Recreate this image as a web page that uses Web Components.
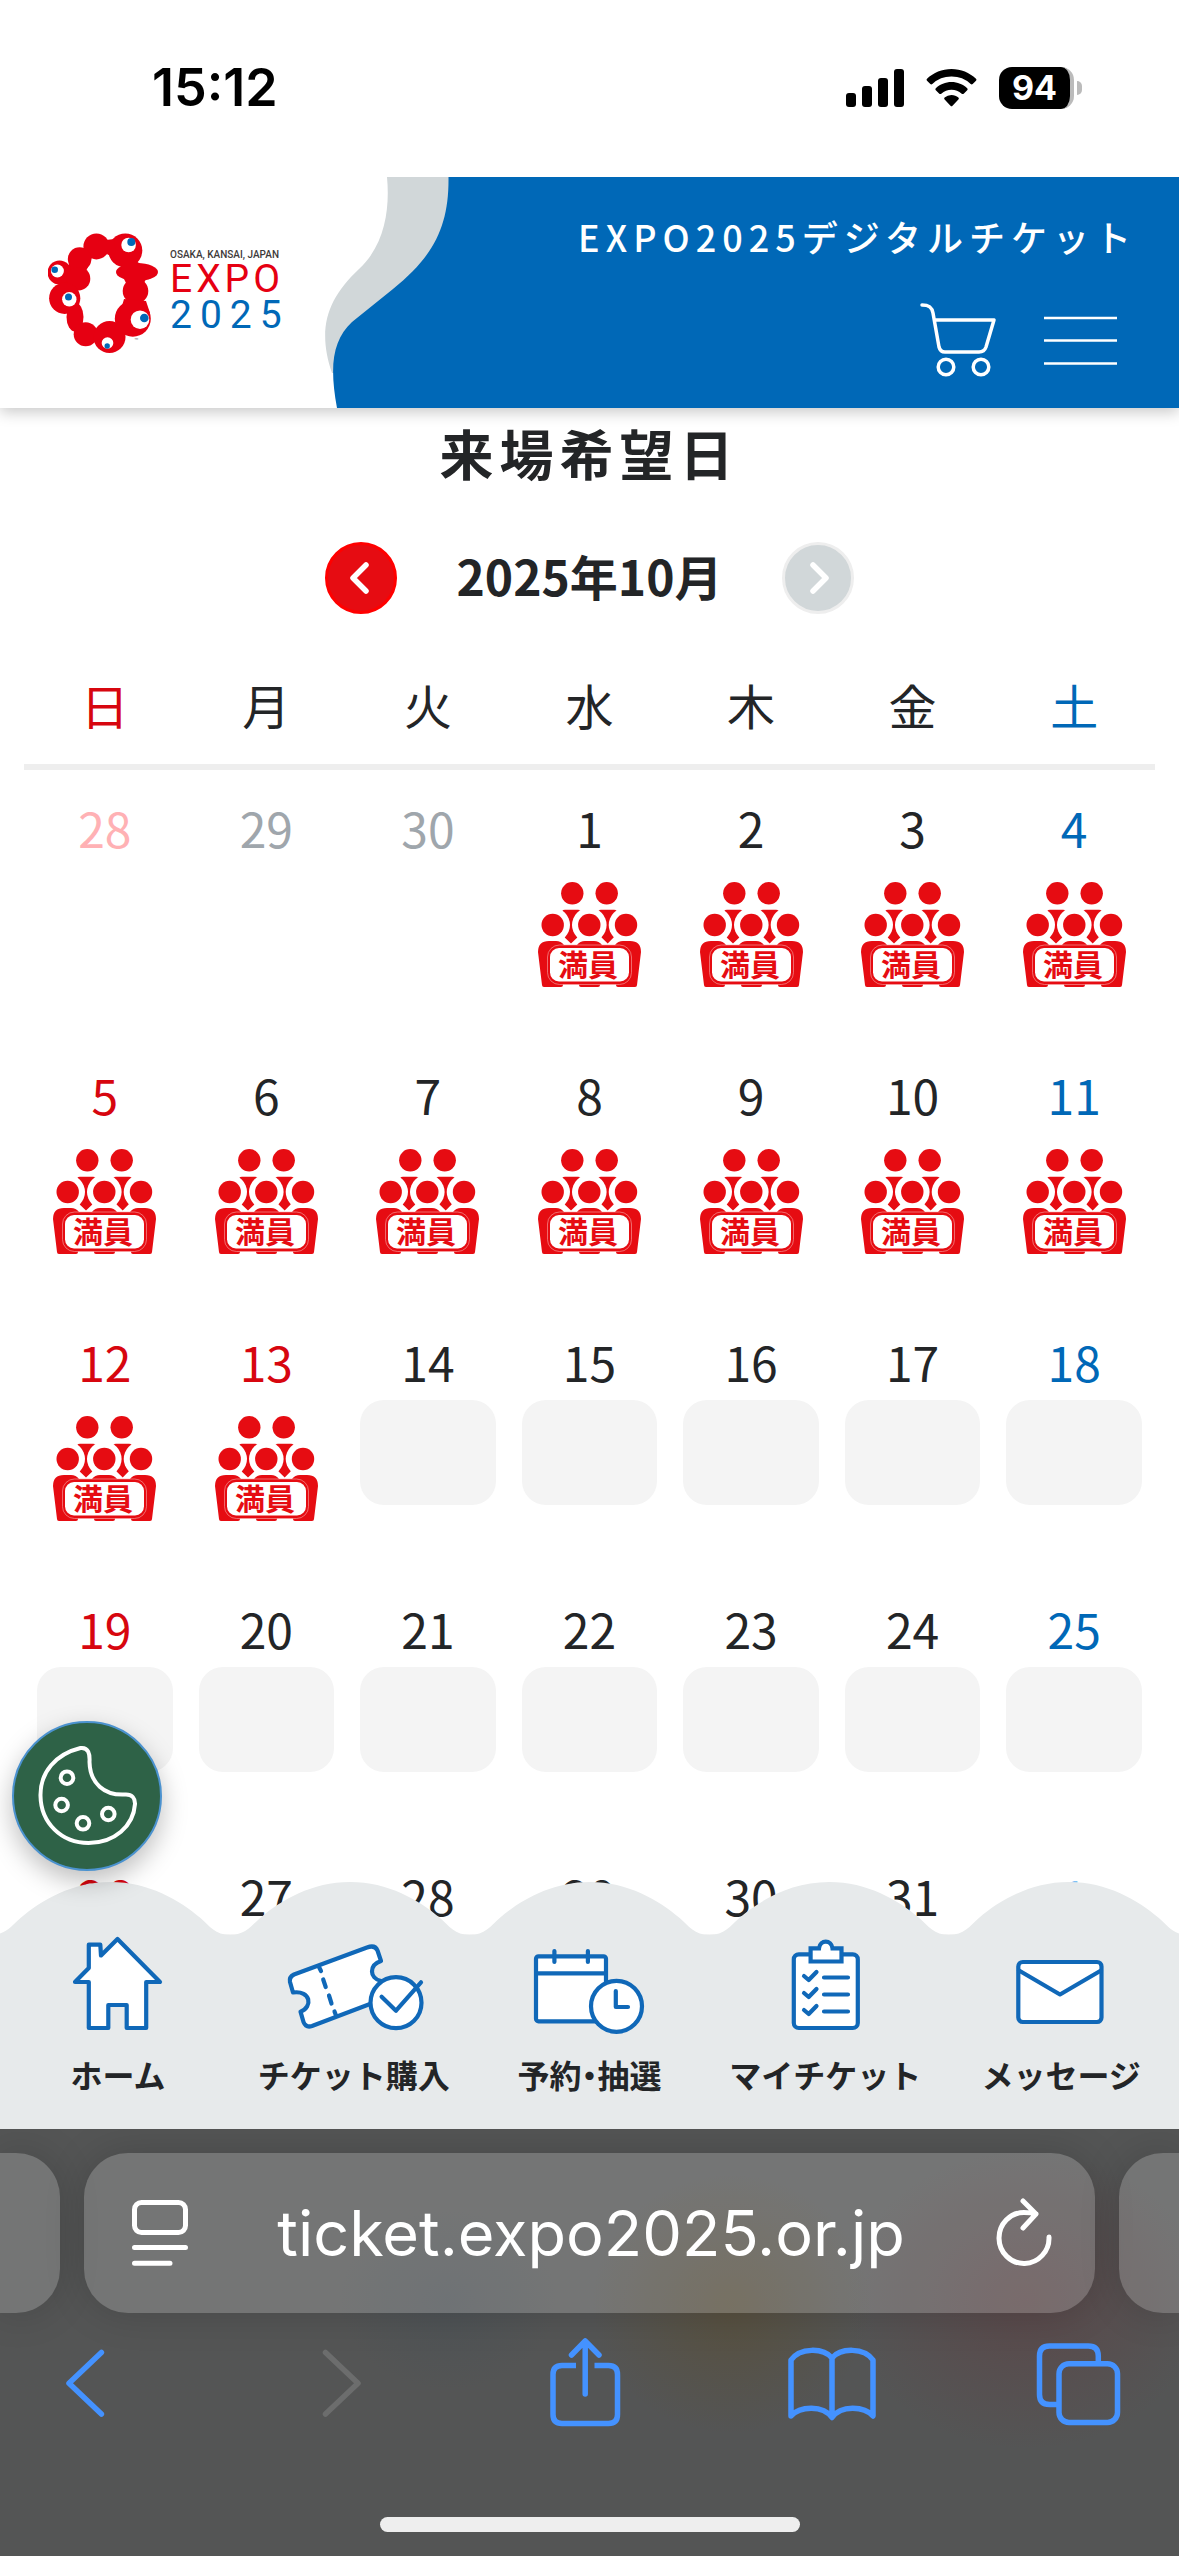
<!DOCTYPE html>
<html lang="ja">
<head>
<meta charset="utf-8">
<meta name="viewport" content="width=device-width, initial-scale=1">
<title>EXPO2025デジタルチケット</title>
<style>
  html, body {
    margin: 0;
    height: 100%;
  }

  body {
    --ink: #232527;
    --red: #e60c12;
    --blue: #0068b7;
    --ui-font: Inter, "Noto Sans CJK JP", sans-serif;
    display: flex;
    flex-direction: column;
    overflow: hidden;
    color: var(--ink);
    background: #fff;
    font-family: "Noto Sans CJK JP", sans-serif;
  }

  site-view {
    flex: 1;
    min-height: 0;
  }
</style>
</head>
<body>

<status-bar time="15:12" battery="94"></status-bar>

<site-view>
  <site-header slot="header">EXPO2025デジタルチケット</site-header>
  <visit-calendar heading="来場希望日" year="2025" month="10"></visit-calendar>
  <cookie-button slot="floating"></cookie-button>
  <tab-bar slot="footer">
    <tab-item icon="home">ホーム</tab-item>
    <tab-item icon="ticket">チケット購入</tab-item>
    <tab-item icon="reserve">予約・抽選</tab-item>
    <tab-item icon="list">マイチケット</tab-item>
    <tab-item icon="mail">メッセージ</tab-item>
  </tab-bar>
</site-view>

<browser-bar address="ticket.expo2025.or.jp"></browser-bar>

<script>
/**
 * Shared base: clones the element's template into an open shadow root
 */
class BaseElement extends HTMLElement {
  connectedCallback() {
    if (this.shadowRoot) return;
    const t = document.createElement("template");
    t.innerHTML = this.template;
    this.attachShadow({ mode: "open" });
    this.shadowRoot.appendChild(t.content.cloneNode(true));
  }
}

/**
 * Phone status bar
 */
class StatusBar extends BaseElement {
  get template() {
    return `
    <style>
      :host {
        display: flex;
        justify-content: space-between;
        align-items: center;
        box-sizing: border-box;
        height: 177px;
        padding: 0 97px 2px 152px;
        color: #000;
        font-family: var(--ui-font);
      }
      time {
        font-size: 52px;
        line-height: 60px;
        font-weight: 600;
      }
      .state {
        display: flex;
        align-items: center;
        gap: 22px;
      }
      .battery {
        display: flex;
        align-items: center;
        gap: 3px;
      }
      .level {
        width: 71px;
        border-right: 4px solid #bbb;
        border-radius: 13px;
        color: #fff;
        background: #000;
        font-size: 34px;
        line-height: 42px;
        font-weight: 700;
        text-align: center;
      }
      .tip {
        width: 5px;
        height: 14px;
        border-radius: 0 6px 6px 0;
        background: #bbb;
      }
      svg { display: block; }
    </style>
    <time>${this.getAttribute("time")}</time>
    <div class="state">
      <svg width="58" height="38" viewBox="0 0 58 38" aria-hidden="true">
        <rect x="0" y="24" width="10" height="14" rx="3"/>
        <rect x="16" y="17" width="10" height="21" rx="3"/>
        <rect x="32" y="9" width="10" height="29" rx="3"/>
        <rect x="48" y="0" width="10" height="38" rx="3"/>
      </svg>
      <svg width="51" height="38" viewBox="0 0 51 38" aria-hidden="true">
        <path d="M25.500 0C35 0 43.500 3.700 50 9.700q1 1 0 2l-3.300 3.300q-1 .9-2 0A28 28 0 0 0 25.500 7.600 28 28 0 0 0 6.300 15q-1 .9-2 0L1 11.700q-1-1 0-2C7.500 3.700 16 0 25.500 0Z"/>
        <path d="M25.500 13c6 0 11.500 2.300 15.700 6.200q1 1 0 2l-3.500 3.500q-1 .8-2 0a15.500 15.500 0 0 0-20.400 0q-1 .8-2 0l-3.500-3.500q-1-1 0-2C14 15.300 19.500 13 25.500 13Z"/>
        <path d="M25.500 26c2.700 0 5 .9 6.900 2.500q1 1 0 2l-5.900 6.300q-1 1-2 0l-5.900-6.300q-1-1 0-2A10.500 10.500 0 0 1 25.500 26Z"/>
      </svg>
      <div class="battery"><span class="level">${this.getAttribute("battery")}</span><span class="tip"></span></div>
    </div>`;
  }
}
customElements.define("status-bar", StatusBar);

/**
 * Scrolling web page area, with slots for what floats over it
 */
class SiteView extends BaseElement {
  get template() {
    return `
    <style>
      :host {
        display: block;
        position: relative;
        overflow: hidden;
      }
      .floating {
        position: absolute;
        left: 12px;
        bottom: 258px;
        z-index: 2;
      }
      .footer {
        position: absolute;
        left: 0;
        right: 0;
        bottom: 0;
        z-index: 1;
      }
    </style>
    <slot name="header"></slot>
    <main><slot></slot></main>
    <div class="footer"><slot name="footer"></slot></div>
    <div class="floating"><slot name="floating"></slot></div>`;
  }
}
customElements.define("site-view", SiteView);

/**
 * Event logo: ring of red cells with eyes, and the wordmark
 */
class ExpoLogo extends BaseElement {
  get template() {
    return `
    <style>
      :host { display: block; }
      a {
        display: flex;
        align-items: center;
        gap: 11px;
        text-decoration: none;
      }
      svg {
        display: block;
        fill: #e60012;
      }
      .eye { fill: #fff; }
      .iris { fill: var(--blue); }
      .words {
        display: grid;
        padding-bottom: 3px;
        font-family: Roboto, sans-serif;
      }
      .place {
        color: #3e3a39;
        font-size: 10px;
        line-height: 12px;
        font-weight: 500;
      }
      .name, .year {
        font-size: 39px;
        line-height: 36px;
      }
      .name {
        color: #e60012;
        letter-spacing: 4px;
      }
      .year {
        color: var(--blue);
        letter-spacing: 8px;
      }
    </style>
    <a href="#top">
      <svg width="111" height="120" viewBox="0 0 111 120" aria-hidden="true">
        <circle cx="48.400" cy="13.400" r="13"/>
        <circle cx="77.300" cy="17.400" r="17"/>
        <circle cx="31.600" cy="26" r="11.800"/>
        <path d="M20 34 24 24 44 24 42 30 38 38 28 56 14 52Z"/>
        <circle cx="11.500" cy="39.500" r="12"/>
        <circle cx="30.500" cy="45.700" r="11.800"/>
        <circle cx="16.700" cy="65.300" r="15.600"/>
        <ellipse cx="27" cy="84" rx="8.500" ry="14.500"/>
        <circle cx="37.700" cy="101.300" r="12"/>
        <circle cx="61.500" cy="104" r="16"/>
        <circle cx="84.800" cy="85.700" r="18"/>
        <circle cx="87.500" cy="58" r="12.800"/>
        <ellipse cx="89" cy="39" rx="21" ry="9"/>
        <path d="M64 28 82 24 94 32 88 38 70 38 74 32ZM76 46h22l-2 4H78ZM76 66l22 2 4 12H72ZM50 8l16-2 2 14-8 2Z"/>
        <g class="eye">
          <circle cx="80.600" cy="12" r="7.300"/>
          <circle cx="9.400" cy="38" r="6.500"/>
          <circle cx="21.300" cy="66.300" r="7.200"/>
          <circle cx="92" cy="86.700" r="9.300"/>
          <circle cx="59.500" cy="110" r="5.800"/>
        </g>
        <g class="iris">
          <circle cx="83.300" cy="9" r="4"/>
          <circle cx="6.700" cy="36.700" r="3.300"/>
          <circle cx="20.500" cy="64" r="3.500"/>
          <circle cx="96.300" cy="85" r="4.300"/>
          <circle cx="59.200" cy="113" r="2.700"/>
        </g>
        <text x="86" y="110" fill="#777" font-size="7" font-family="Roboto, sans-serif">™</text>
      </svg>
      <div class="words">
        <span class="place">OSAKA, KANSAI, JAPAN</span>
        <span class="name">EXPO</span>
        <span class="year">2025</span>
      </div>
    </a>`;
  }
}
customElements.define("expo-logo", ExpoLogo);

/**
 * Site header with logo, service name, cart and menu
 */
class SiteHeader extends BaseElement {
  get template() {
    return `
    <style>
      :host {
        display: grid;
        grid-template-columns: 325px 1fr;
        position: relative;
        z-index: 1;
        height: 231px;
        background: #fff;
        box-shadow: 0 4px 14px rgba(0, 0, 0, .22);
      }
      expo-logo {
        align-self: center;
        padding-left: 48px;
      }
      .panel {
        display: grid;
        grid-template-columns: 124px 1fr;
        min-width: 0;
      }
      .wave { display: block; }
      .bar {
        display: flex;
        flex-direction: column;
        align-items: flex-end;
        justify-content: space-between;
        box-sizing: border-box;
        height: 231px;
        padding: 33px 42px 28px 0;
        color: #fff;
        background: var(--blue);
      }
      .service {
        font-size: 36px;
        line-height: 52px;
        font-weight: 500;
        letter-spacing: 6px;
        white-space: nowrap;
      }
      .tools {
        display: flex;
        gap: 42px;
        padding-right: 20px;
      }
      button {
        display: grid;
        place-items: center;
        padding: 0;
        border: 0;
        color: inherit;
        background: none;
      }
      svg {
        fill: none;
        stroke: currentColor;
      }
      .wave { stroke: none; }
    </style>
    <expo-logo></expo-logo>
    <div class="panel">
      <svg class="wave" width="124" height="231" viewBox="0 0 124 231" aria-hidden="true">
        <path fill="#d1d7d9" d="M62 0C65 32 60 68 34 92 2 122-8 152 7 196H124V0Z"/>
        <path fill="#0068b7" d="M123.500 0C124 48 110 78 68 112L27 145C8 163 4 188 12 231H124V0Z"/>
      </svg>
      <div class="bar">
        <span class="service"><slot></slot></span>
        <div class="tools">
          <button type="button" aria-label="カート">
            <svg width="86" height="80" viewBox="0 0 86 80" stroke-width="3.500" stroke-linecap="round" stroke-linejoin="round">
              <path d="M6 5c7 0 10 2 11 8l6 34c1 4 3 5 6 5h34c4 0 6-2 7-5l8-27H19"/>
              <circle cx="30" cy="67" r="7.800"/>
              <circle cx="65" cy="67" r="7.800"/>
            </svg>
          </button>
          <button type="button" aria-label="メニュー">
            <svg width="73" height="80" viewBox="0 0 73 80" stroke-width="2.500">
              <path d="M0 18h73M0 40.500h73M0 63.500h73"/>
            </svg>
          </button>
        </div>
      </div>
    </div>`;
  }
}
customElements.define("site-header", SiteHeader);

/**
 * Crowd icon shown on a day that is sold out
 */
class FullBadge extends BaseElement {
  get template() {
    return `
    <style>
      :host { display: block; }
      svg {
        display: block;
        margin: 0 auto;
        fill: var(--red);
      }
      .gap, .board { fill: #fff; }
      .line {
        fill: none;
        stroke: #f8a9a9;
        stroke-width: .6;
      }
      text {
        font-size: 30px;
        font-weight: 700;
      }
    </style>
    <svg width="103" height="106" viewBox="0 0 103 106">
      <path d="M24 29q1-1.300 3-1.300h13q2 0 3 1.300V52L33 61.500 23 52ZM60 29q1-1.300 3-1.300h13q2 0 3 1.300V52L69.700 61.500 60 52Z"/>
      <g class="gap">
        <circle cx="14.700" cy="43" r="17.300"/>
        <circle cx="51.300" cy="43" r="17.300"/>
        <circle cx="88" cy="43" r="17.300"/>
      </g>
      <circle cx="34.300" cy="11.300" r="11.200"/>
      <circle cx="68.700" cy="11.300" r="11.200"/>
      <circle cx="14.700" cy="43" r="11.200"/>
      <circle cx="51.300" cy="43" r="11.200"/>
      <circle cx="88" cy="43" r="11.200"/>
      <path d="M0 70Q0 59 11 59h7q5 0 8 4l-1 40q0 2-2 2H6q-2 0-2-2Z"/>
      <path d="M39 63q3-4 8-4h9q5 0 8 4l-2 40q0 2-2 2H43q-2 0-2-2Z"/>
      <path d="M103 70q0-11-11-11h-7q-5 0-8 4l1 40q0 2 2 2h17q2 0 2-2Z"/>
      <rect x="9.500" y="63" width="84" height="39.500" rx="12"/>
      <rect class="line" x="9.500" y="63" width="84" height="39.500" rx="12"/>
      <rect class="board" x="12" y="66" width="79" height="33.500" rx="9"/>
      <text x="50" y="94" text-anchor="middle">満員</text>
    </svg>`;
  }
}
customElements.define("full-badge", FullBadge);

/**
 * Month calendar for choosing the day of the visit
 */
class VisitCalendar extends BaseElement {
  get rows() {
    const year = Number(this.getAttribute("year"));
    const month = Number(this.getAttribute("month")) - 1;
    const lead = new Date(year, month, 1).getDay();
    let html = "";
    for (let i = 0; i < 35; i++) {
      const date = new Date(year, month, i - lead + 1);
      const day = date.getDate();
      const other = date.getMonth() !== month;
      const holiday = !other && day === 13;
      const kind = (i % 7 === 0 || holiday) ? "sun" : i % 7 === 6 ? "sat" : "";
      let mark = "";
      if (!other) mark = day <= 13 ? "<full-badge></full-badge>" : `<span class="closed"></span>`;
      if (i % 7 === 0) html += "<tr>";
      html += `<td class="${kind}${other ? " other" : ""}"><span class="day">${day}</span>${mark}</td>`;
      if (i % 7 === 6) html += "</tr>";
    }
    return html;
  }

  get template() {
    const names = [..."日月火水木金土"];
    return `
    <style>
      :host {
        display: block;
        padding: 15px 24px 0;
      }
      h1 {
        margin: 0;
        font-size: 54px;
        line-height: 60px;
        letter-spacing: 6px;
        text-align: center;
      }
      .month {
        display: flex;
        justify-content: center;
        align-items: center;
        gap: 60px;
        margin: 59px 0 38px;
      }
      h2 {
        margin: 0;
        padding-bottom: 6px;
        font-size: 48px;
        line-height: 66px;
      }
      button {
        display: grid;
        place-items: center;
        box-sizing: border-box;
        width: 72px;
        height: 72px;
        padding: 0;
        border: 3px solid red;
        border-radius: 50%;
        background: var(--red);
      }
      button:disabled {
        border-color: #eee;
        background: #d1d7d9;
      }
      svg {
        fill: none;
        stroke: #fff;
        stroke-width: 5.500;
        stroke-linecap: round;
        stroke-linejoin: round;
      }
      table {
        width: 100%;
        table-layout: fixed;
        border-spacing: 0;
        font-size: 48px;
        text-align: center;
      }
      th, td { padding: 0; }
      th {
        height: 104px;
        padding-bottom: 8px;
        border-bottom: 6px solid #eee;
        font-weight: 400;
      }
      td {
        height: 267px;
        vertical-align: top;
      }
      .day {
        display: block;
        padding: 24px 0 6px;
        line-height: 66px;
      }
      .closed {
        display: block;
        height: 105px;
        margin: 0 13px;
        border-radius: 24px;
        background: #f4f4f4;
      }
      full-badge { margin-top: 16px; }
      .sun { color: #d7060f; }
      .sat { color: var(--blue); }
      .other { color: #9fa6ac; }
      .sun.other { color: #ffb1b4; }
      .sat.other { color: #7fc0f5; }
    </style>
    <h1>${this.getAttribute("heading")}</h1>
    <div class="month">
      <button type="button" aria-label="前の月">
        <svg width="40" height="40" viewBox="0 0 40 40"><path d="M25 7 12 20l13 13"/></svg>
      </button>
      <h2>${this.getAttribute("year")}年${this.getAttribute("month")}月</h2>
      <button type="button" aria-label="次の月" disabled>
        <svg width="40" height="40" viewBox="0 0 40 40"><path d="M15 7 28 20 15 33"/></svg>
      </button>
    </div>
    <table>
      <thead>
        <tr>${names.map((n, i) => `<th class="${i === 0 ? "sun" : i === 6 ? "sat" : ""}">${n}</th>`).join("")}</tr>
      </thead>
      <tbody>${this.rows}</tbody>
    </table>`;
  }
}
customElements.define("visit-calendar", VisitCalendar);

/**
 * Round button that opens the cookie settings
 */
class CookieButton extends BaseElement {
  get template() {
    return `
    <style>
      :host { display: block; }
      button {
        display: block;
        box-sizing: border-box;
        width: 150px;
        height: 150px;
        padding: 0;
        border: 2px solid #4b92cf;
        border-radius: 50%;
        background: #2e6247;
        box-shadow: 0 10px 26px rgba(0, 0, 0, .26);
      }
      svg {
        display: block;
        margin: -2px;
        fill: none;
        stroke: #fff;
        stroke-width: 4;
        stroke-linejoin: round;
      }
    </style>
    <button type="button" aria-label="Cookie設定">
      <svg width="150" height="150" viewBox="0 0 150 150">
        <path d="M68.500 27C44 33 28 51 28.500 75c.5 27 21 47 48 47 26 0 45-17 46.500-39 .2-6-3-9.500-9-9.500C92 75 78 62 77.500 41c.5-8-1-15-9-14Z"/>
        <circle cx="55" cy="56.700" r="6.300"/>
        <circle cx="49.600" cy="84" r="6.300"/>
        <circle cx="71" cy="102.300" r="6.300"/>
        <circle cx="96.300" cy="93" r="6.300"/>
      </svg>
    </button>`;
  }
}
customElements.define("cookie-button", CookieButton);

const TAB_ICONS = {
  home: `<path d="M69.500 3 112 46H98.200V92H78.700V69H60.300V92H40.800V46H27L40.800 32V8.700H52.300L53 19.500Z"/>`,
  ticket: `
    <path d="M10 38.500 83 11.500q8-3 10.500 3L97 25c-12 4-12 17 0 20L104 62 86 68 28 90q-6 2-8.500-4L16.500 75.700C29 71 27 54 9 56.500L6 46q-1-5 4-7.500Z"/>
    <path d="m35 31 2 4M39.200 43.500l2.500 7.500M45 59.500l2.500 8M50.500 75.500l1.500 4"/>
    <circle cx="112" cy="66.700" r="25.500"/>
    <path fill="none" d="M97.600 60.700 112 74.700 137 46.300"/>`,
  reserve: `
    <rect x="17" y="20.300" width="70" height="65" rx="2.500"/>
    <path d="M17 37.300H87M35.400 15V26M68.900 15V26"/>
    <circle cx="97.500" cy="70.300" r="25.500"/>
    <path fill="none" d="M96.800 55V71H109"/>`,
  list: `
    <rect x="38.800" y="18.300" width="64" height="73.700" rx="5"/>
    <path stroke-linejoin="miter" d="M55.600 12.300H64C65 3.500 76.500 3.500 77.500 12.300H86.500V25.500H55.600Z"/>
    <path fill="none" d="M49 40 53.700 44 61.500 36M49 57 53.700 61 61.500 53M49 74 53.700 78 61.500 70M69 41.500H93M69 58.500H93M69 75.500H93"/>`,
  mail: `
    <rect x="27.300" y="26" width="83.200" height="60" rx="4.500"/>
    <path fill="none" d="M28 34.500 69 58.500 110 34.500"/>`,
};

/**
 * One entry of the bottom navigation
 */
class TabItem extends BaseElement {
  get template() {
    return `
    <style>
      :host {
        display: block;
        flex: 1;
      }
      a {
        display: flex;
        flex-direction: column;
        align-items: center;
        gap: 22px;
        color: inherit;
        font-size: 32px;
        line-height: 32px;
        font-weight: 700;
        text-decoration: none;
        white-space: nowrap;
        font-feature-settings: "halt";
      }
      svg {
        display: block;
        overflow: visible;
        fill: #fff;
        stroke: #1068b8;
        stroke-width: 4.200;
        stroke-linecap: round;
        stroke-linejoin: round;
      }
    </style>
    <a href="#${this.getAttribute("icon")}">
      <svg width="140" height="100" viewBox="0 0 140 100" aria-hidden="true">${TAB_ICONS[this.getAttribute("icon")]}</svg>
      <span><slot></slot></span>
    </a>`;
  }
}
customElements.define("tab-item", TabItem);

/**
 * Bottom navigation with a wavy upper edge
 */
class TabBar extends BaseElement {
  get template() {
    // five equal bumps; the outer ones run a little past both sides
    const bump = "c15 0 21-9 30-17c21-18 52-36 90-36s69 18 90 36c9 8 15 17 29.600 17";
    return `
    <style>
      :host { display: block; }
      .wave {
        display: block;
        width: 100%;
        height: 54px;
        margin-bottom: -1px;
        fill: #e7eaeb;
      }
      nav {
        display: flex;
        box-sizing: border-box;
        height: 194px;
        padding-top: 1px;
        background: #e7eaeb;
      }
      ::slotted(*) { min-width: 0; }
    </style>
    <svg class="wave" viewBox="0 0 1179 54" preserveAspectRatio="none" aria-hidden="true">
      <path d="M-9.500 53${bump.repeat(5)}V54H-9.500Z"/>
    </svg>
    <nav><slot></slot></nav>`;
  }
}
customElements.define("tab-bar", TabBar);

/**
 * Browser address field and toolbar
 */
class BrowserBar extends BaseElement {
  get template() {
    return `
    <style>
      :host {
        display: block;
        overflow: hidden;
        padding: 24px 0;
        color: #fff;
        background:
          radial-gradient(ellipse 140px 130px at 62% 41%, rgba(92, 74, 36, .45), transparent),
          radial-gradient(ellipse 180px 150px at 87% 40%, rgba(98, 54, 58, .4), transparent),
          radial-gradient(ellipse 110px 90px at 38% 40%, rgba(62, 76, 86, .3), transparent),
          #545555;
      }
      .pages {
        display: grid;
        grid-template-columns: 60px minmax(0, 1fr) 60px;
        gap: 24px;
      }
      .page {
        display: flex;
        align-items: center;
        box-sizing: border-box;
        height: 160px;
        padding: 0 43px 0 48px;
        border-radius: 44px;
        background: rgba(255, 255, 255, .19);
        box-shadow: 0 0 40px rgba(0, 0, 0, .16);
      }
      .before {
        border-radius: 0 44px 44px 0;
        padding: 0;
      }
      .after {
        border-radius: 44px 0 0 44px;
        padding: 0;
      }
      input {
        flex: 1;
        min-width: 0;
        padding: 0;
        border: 0;
        color: inherit;
        background: none;
        font: 400 63px/80px var(--ui-font);
        text-align: center;
      }
      button {
        display: block;
        padding: 0;
        border: 0;
        color: inherit;
        background: none;
      }
      svg {
        display: block;
        fill: none;
        stroke: currentColor;
        stroke-width: 5;
        stroke-linecap: round;
        stroke-linejoin: round;
      }
      .tools {
        display: flex;
        justify-content: space-between;
        margin: 23px 53px 85px 37px;
        color: #4492ff;
      }
      .tools svg { stroke-width: 5.500; }
      .tools :disabled { color: #6c6d6d; }
      .handle {
        width: 420px;
        height: 15px;
        margin: 0 auto;
        border-radius: 8px;
        background: #eee;
      }
    </style>
    <div class="pages">
      <div class="page before"></div>
      <div class="page">
        <button type="button" aria-label="ページ設定">
          <svg width="56" height="66" viewBox="0 0 56 66"><rect x="2.500" y="2.500" width="51" height="30" rx="7"/><path d="M2.500 47.500h51M2.500 63.300H38"/></svg>
        </button>
        <input type="text" aria-label="アドレス" value="${this.getAttribute("address")}" readonly>
        <button type="button" aria-label="再読み込み">
          <svg width="58" height="72" viewBox="0 0 58 72"><path d="M55 40A25 25.500 0 1 1 30 15.500Q37 15.500 42 17M29 4 42 17 29 31"/></svg>
        </button>
      </div>
      <div class="page after"></div>
    </div>
    <div class="tools">
      <button type="button" aria-label="戻る">
        <svg width="96" height="96" viewBox="0 0 96 96"><path d="M64.400 16.500 32 47.300 64.400 78"/></svg>
      </button>
      <button type="button" aria-label="進む" disabled>
        <svg width="96" height="96" viewBox="0 0 96 96"><path d="M40.500 16.500 73 47.300 40.500 78"/></svg>
      </button>
      <button type="button" aria-label="共有">
        <svg width="96" height="96" viewBox="0 0 96 96"><path stroke-linecap="butt" d="M42 29.500H28q-9 0-9 9V78.500q0 9 9 9H74.500q9 0 9-9V38.500q0-9-9-9H60.500"/><path d="M51.200 58V5M37.500 19 51.200 5 65 19"/></svg>
      </button>
      <button type="button" aria-label="ブックマーク">
        <svg width="96" height="96" viewBox="0 0 96 96"><path d="M50 22C41 11.500 18 11.500 9 24V80C18 70 41 69 50 81.500 59 69 82 70 91 80V24C82 11.500 59 11.500 50 22ZV81"/></svg>
      </button>
      <button type="button" aria-label="タブ">
        <svg width="96" height="96" viewBox="0 0 96 96"><path stroke-linecap="butt" d="M68.300 27V20q0-10-10-10H19.500q-10 0-10 10V58.500q0 10 10 10H29"/><rect x="29" y="27.700" width="58.500" height="58.700" rx="10"/></svg>
      </button>
    </div>
    <div class="handle"></div>`;
  }
}
customElements.define("browser-bar", BrowserBar);
</script>
</body>
</html>
